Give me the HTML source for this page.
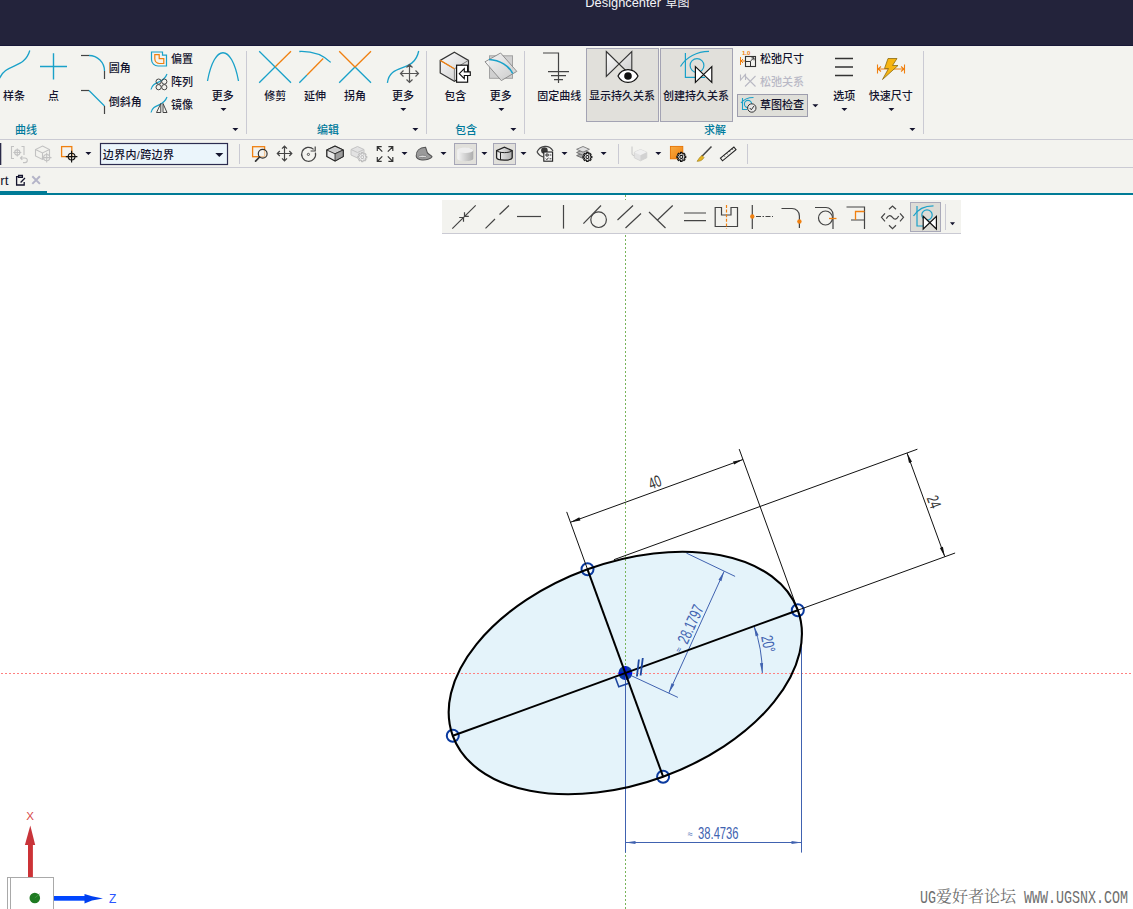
<!DOCTYPE html>
<html lang="zh-CN">
<head>
<meta charset="utf-8">
<title>Designcenter 草图</title>
<style>
html,body{margin:0;padding:0;}
body{width:1133px;height:909px;overflow:hidden;position:relative;background:#fff;
 font-family:"Liberation Sans","Noto Sans CJK SC",sans-serif;font-size:12px;color:#1a1a2e;}
.abs{position:absolute;}
#title{left:0;top:0;width:1133px;height:45px;background:#23233b;border-bottom:1px solid #171737;}
#title .t{position:absolute;left:585px;top:-6px;color:#f0f0f4;font-size:13px;white-space:nowrap;}
#ribbon{left:0;top:46px;width:1133px;height:93px;background:#f3f3ef;border-bottom:1px solid #cacad3;}
#tbar{left:0;top:140px;width:1133px;height:27px;background:#f3f3ef;border-bottom:1px solid #cacad3;}
#tabs{left:0;top:168px;width:1133px;height:25px;background:#f3f3ef;border-bottom:2px solid #007b96;}
#tabact{left:0;top:191px;width:47px;height:4px;background:#007b96;}
.lbl{position:absolute;white-space:nowrap;font-size:12px;line-height:14px;color:#1a1a2e;}
.c{transform:translateX(-50%);}
.grp{color:#1b89a8;}
.sep{position:absolute;width:1px;background:#cacad3;}
.arr{position:absolute;width:0;height:0;border-left:3px solid transparent;border-right:3px solid transparent;border-top:3px solid #1a1a2e;}
svg{position:absolute;overflow:visible;}
.rl text{font-family:"Liberation Sans","Noto Sans CJK SC",sans-serif;font-size:11px;fill:#14142e;font-weight:500;}
.rl1{font-family:"Liberation Sans","Noto Sans CJK SC",sans-serif;font-size:11px;fill:#14142e;font-weight:500;letter-spacing:.35px;}
.rg text{font-family:"Liberation Sans","Noto Sans CJK SC",sans-serif;font-size:11px;fill:#007a9c;font-weight:500;}
#cv .k{stroke:#111;stroke-width:1;fill:none;}
#cv .ka{fill:#111;stroke:none;}
#cv .b{stroke:#4062b0;stroke-width:1;fill:none;}
#cv .ba{fill:#4062b0;stroke:none;}
#cv text{font-family:"Liberation Sans",sans-serif;}
#cv .tk{fill:#333;}
#cv .tb{fill:#4062b0;}
</style>
</head>
<body>
<div id="title" class="abs"><svg width="200" height="20" viewBox="580 0 200 20" style="left:580px;top:0"><text x="585.3" y="7.2" font-size="12.85" fill="#f4f4f8" style="font-family:'Liberation Sans','Noto Sans CJK SC',sans-serif">Designcenter <tspan font-size="12" dx="1">草图</tspan></text></svg></div>
<div id="ribbon" class="abs"></div>
<div id="tbar" class="abs"></div>
<div id="tabs" class="abs"></div>
<div id="tabact" class="abs"></div>
<svg id="rb" width="1133" height="94" viewBox="0 46 1133 94" style="left:0;top:46px">
<g fill="none" stroke-linecap="butt">
<!-- 曲线 group icons -->
<path d="M-1 79.5C6 62 24 70 29.8 50.5" stroke="#19a1c9" stroke-width="1.3"/>
<path d="M40 66.5H67M53.5 53.2V79.6" stroke="#19a1c9" stroke-width="1.4"/>
<path d="M81 55.5H89" stroke="#444" stroke-width="1.2"/>
<path d="M89 55.5A15.5 15.5 0 0 1 104.5 71" stroke="#19a1c9" stroke-width="1.3"/>
<path d="M104.5 71V79" stroke="#444" stroke-width="1.2"/>
<path d="M81 90.5H89" stroke="#444" stroke-width="1.2"/>
<path d="M89 90.5L104.5 106" stroke="#19a1c9" stroke-width="1.3"/>
<path d="M104.5 106V114" stroke="#444" stroke-width="1.2"/>
<!-- offset -->
<path d="M151.5 52H162.5V55.2H166.5V66H158A6.5 6.5 0 0 1 151.5 59.5Z" stroke="#19a1c9" stroke-width="1.2"/>
<path d="M154.8 54.6H159.2V58.6H163.8V63.5H159.5A4.7 4.7 0 0 1 154.8 58.8Z" stroke="#f08010" stroke-width="1.2"/>
<!-- pattern -->
<path d="M151 89.5C153 80 163 85 167 74" stroke="#19a1c9" stroke-width="1.2"/>
<circle cx="158.6" cy="81.6" r="2.6" stroke="#444" stroke-width="1"/><circle cx="164.3" cy="81.6" r="2.6" stroke="#444" stroke-width="1"/>
<circle cx="158.6" cy="87.2" r="2.6" stroke="#444" stroke-width="1"/><circle cx="164.3" cy="87.2" r="2.6" stroke="#444" stroke-width="1"/>
<!-- mirror -->
<path d="M151 112.5C153 103 163 108 167 97" stroke="#19a1c9" stroke-width="1.2"/>
<path d="M156.5 112.5H160.8V103.5ZM163 103.5V112.5H167Z" stroke="#444" stroke-width="1"/>
<!-- more parabola -->
<path d="M207.5 81C214.5 43.3 231.5 43.3 238.5 81" stroke="#19a1c9" stroke-width="1.3"/>
<!-- 编辑 group icons -->
<path d="M259.2 51.2L291 82.8M259.2 82.8L275 67" stroke="#19a1c9" stroke-width="1.3"/>
<path d="M275 67L291 51.2" stroke="#f08010" stroke-width="1.3"/>
<path d="M299.3 51.5C312 51 323 55 330.7 62.4M299.3 82.8L307 75" stroke="#19a1c9" stroke-width="1.3"/>
<path d="M307 75L323.2 58.5" stroke="#f08010" stroke-width="1.3"/>
<path d="M339.2 82.8L355 67L371 82.8" stroke="#19a1c9" stroke-width="1.3"/>
<path d="M339.2 51.2L355 67L371 51.2" stroke="#f08010" stroke-width="1.3"/>
<path d="M387.4 82.8C390 62 414 74 418.7 51" stroke="#19a1c9" stroke-width="1.3"/>
<path d="M400.5 73.5H418.5M409.5 64.5V82.5M403.5 70.5L400.5 73.5L403.5 76.5M415.5 70.5L418.5 73.5L415.5 76.5M406.5 67.5L409.5 64.5L412.5 67.5M406.5 79.5L409.5 82.5L412.5 79.5" stroke="#555" stroke-width="1.2"/>
</g>
<!-- include cube -->
<defs>
<linearGradient id="gc" x1="0" y1="0" x2="1" y2="1"><stop offset="0" stop-color="#fdfdfd"/><stop offset="1" stop-color="#c9c9c9"/></linearGradient>
<linearGradient id="go" x1="0" y1="0" x2="1" y2="1"><stop offset="0" stop-color="#f9a63a"/><stop offset="1" stop-color="#ee7d0c"/></linearGradient>
</defs>
<path d="M454.4 52.2L468.5 60.4V73L454.4 81.2L440.2 73V60.4Z" fill="url(#gc)" stroke="#333" stroke-width="1.2"/>
<path d="M440.2 60.4L454.4 68.8L468.5 60.4M454.4 68.8V81" fill="none" stroke="#666" stroke-width="0.8"/>
<path d="M440.2 60.4L454.4 68.8" stroke="#f08010" stroke-width="1.3"/>
<rect x="456.6" y="65.2" width="11" height="17" fill="#fff" stroke="#111" stroke-width="1.2"/>
<path d="M459.3 73.7L464.3 68.7V71.9H470.3V75.5H464.3V78.7Z" fill="#fff" stroke="#111" stroke-width="1.1"/>
<!-- include more -->
<rect x="489.5" y="55.8" width="23" height="22.5" fill="#d0d0d0" stroke="#a2a2a2" stroke-width="1"/>
<path d="M485 61.8L500.6 53L516.8 71.4L501.3 80.6Z" fill="url(#gc)" fill-opacity=".85" stroke="#8f8f8f" stroke-width="1"/>
<path d="M489 59.5C500 60 509 66 512.7 73.5" fill="none" stroke="#19a1c9" stroke-width="1.6"/>
<!-- fix curve -->
<path d="M543 53H558.5V83M548 71.7H569M551 75.7H566M554 79.7H563" fill="none" stroke="#444" stroke-width="1.2"/>
<!-- buttons -->
<rect x="586.5" y="48.5" width="72" height="73" fill="#e1e0db" stroke="#a3a3b3"/>
<rect x="660.5" y="48.5" width="72" height="73" fill="#e1e0db" stroke="#a3a3b3"/>
<path d="M606.3 51.5L631.8 76.5V51.5L606.3 76.5Z" fill="url(#gc)" stroke="#333" stroke-width="1.1"/>
<path d="M618 76C622 67.5 634 67.5 638 76C634 84.5 622 84.5 618 76Z" fill="#fff" stroke="#111" stroke-width="1.2"/>
<circle cx="628" cy="76" r="3.8" fill="#111"/>
<g fill="none" stroke="#19a1c9" stroke-width="1.2">
<path d="M685.4 53V77.4H705"/><path d="M680.5 66.5C686 57 697 51.5 709 51.3"/><circle cx="697" cy="65.5" r="6.9"/>
</g>
<path d="M695.4 66.6L711.8 82.4V66.6L695.4 82.4Z" fill="#fff" stroke="#111" stroke-width="1.2"/>
<!-- relax dim icon -->
<g fill="none">
<path d="M740.5 57V65M741 61H746M743 59L741 61L743 63" stroke="#f08010" stroke-width="1"/>
<rect x="745.5" y="56.5" width="10" height="10" stroke="#333" stroke-width="1.1"/>
<path d="M745.5 61.5H750.5V66.5M750.5 61L754 57.8M751.5 57.8H754V60.3" stroke="#333" stroke-width="1"/>
<path d="M740.5 74.5V80L745.5 74.5V80M744 75L755.5 86.5M755.5 76L745 86.5" stroke="#b9b9c3" stroke-width="1.1"/>
</g>
<text x="742" y="55" font-size="6" font-weight="bold" fill="#f08010" font-family="Liberation Sans,sans-serif">1.0</text>
<rect x="737.5" y="94.5" width="70" height="22" fill="#dfdfd9" stroke="#9d9dad"/>
<g fill="none" stroke="#19a1c9" stroke-width="1.1"><path d="M742.5 98V109.5H747"/><path d="M741 103C744 99 748 97.5 753.5 97.5"/><circle cx="748" cy="104" r="3.6"/></g>
<circle cx="751.8" cy="108" r="4.2" fill="#e8e8e8" stroke="#333" stroke-width="1"/>
<path d="M749.8 108L751.3 109.8L754 106" fill="none" stroke="#333" stroke-width="1"/>
<!-- options -->
<path d="M835 58.5H853M835 67H853M835 75.4H853" stroke="#333" stroke-width="1.5" fill="none"/>
<!-- quick dim -->
<path d="M877.5 64.5V73.5M904.5 64.5V73.5M878 69H904M881 66.5L878 69L881 71.5M901 66.5L904 69L901 71.5" stroke="#f08010" stroke-width="1.1" fill="none"/>
<path d="M888 58.5H897L892.5 65.5H898L882.5 79.5L888.5 68.5H884.5Z" fill="#f7b512" stroke="#8a6a10" stroke-width=".8"/>
<!-- separators -->
<path d="M246.5 51V134M426.5 51V134M524.5 51V134M923.5 51V134" stroke="#cacad3" stroke-width="1" fill="none"/>
<!-- arrows -->
<g fill="#14142e">
<path d="M220.5 108H226.5L223.5 111Z"/><path d="M400.3 108H406.3L403.3 111Z"/><path d="M498.4 108H504.4L501.4 111Z"/>
<path d="M841.4 108H847.4L844.4 111Z"/><path d="M888.4 108H894.4L891.4 111Z"/><path d="M812.4 104.2H818.4L815.4 107.2Z"/>
<path d="M232.4 128H238.4L235.4 131Z"/><path d="M412.4 128H418.4L415.4 131Z"/><path d="M510.4 128H516.4L513.4 131Z"/><path d="M909.4 128H915.4L912.4 131Z"/>
</g>
<!-- labels -->
<g class="rl" text-anchor="middle">
<text x="14.1" y="99.5">样条</text><text x="53.5" y="99.5">点</text><text x="222.7" y="99.5">更多</text>
<text x="275.2" y="99.5">修剪</text><text x="315.1" y="99.5">延伸</text><text x="355" y="99.5">拐角</text><text x="403" y="99.5">更多</text>
<text x="455.2" y="99.5">包含</text><text x="500.8" y="99.5">更多</text><text x="559.3" y="99.5">固定曲线</text>
<text x="622" y="99.5">显示持久关系</text><text x="696" y="99.5">创建持久关系</text>
<text x="844.3" y="99.5">选项</text><text x="890.7" y="99.5">快速尺寸</text>
</g>
<g class="rl">
<text x="108.8" y="71.8">圆角</text><text x="108.8" y="105.5">倒斜角</text>
<text x="171" y="62.5">偏置</text><text x="171" y="85.7">阵列</text><text x="171" y="108.7">镜像</text>
<text x="760" y="62.8">松弛尺寸</text><text x="760" y="85.8" style="fill:#b9b9c6">松弛关系</text><text x="760" y="108.8">草图检查</text>
</g>
<g class="rg">
<text x="15" y="133.7" fill="#1b88a8">曲线</text><text x="317" y="133.7" fill="#1b88a8">编辑</text><text x="455" y="133.7" fill="#1b88a8">包含</text><text x="704" y="133.7" fill="#1b88a8">求解</text>
</g>
</svg>

<svg id="tb" width="1133" height="28" viewBox="0 140 1133 28" style="left:0;top:140px">
<rect x="0" y="143" width="1.3" height="22" fill="#2a2a48"/>
<g fill="none" stroke="#c2c2c2" stroke-width="1.1">
<path d="M14 146.5H11.5V158.5H14M21.5 146.5H24V155"/><circle cx="17.3" cy="152.5" r="2.6"/><path d="M17.3 148.5V156.5M13.3 152.5H21.3"/>
<path d="M20.5 158H25A2.3 2.3 0 0 1 25 162.6H23M22.3 156.2L20.5 158L22.3 159.8"/>
<path d="M42.5 146L49.5 149.5V156L42.5 159.5L35.5 156V149.5ZM35.5 149.5L42.5 153L49.5 149.5M42.5 153V159.5"/>
</g>
<circle cx="46.7" cy="157.6" r="3.1" fill="#f3f3ef" stroke="#c2c2c2" stroke-width="1.1"/><path d="M46.7 152.8V162.4M41.9 157.6H51.5" stroke="#c2c2c2" stroke-width="1.1"/>
<rect x="61.6" y="146.6" width="10.2" height="10" fill="none" stroke="#f08010" stroke-width="1.3"/>
<circle cx="71.6" cy="156.6" r="3.4" fill="none" stroke="#111" stroke-width="1.15"/><path d="M71.6 150.8V162.4M65.8 156.6H77.4" stroke="#111" stroke-width="1.15"/>
<!-- combobox -->
<rect x="100.5" y="143.5" width="127" height="21" fill="#ebf5fb" stroke="#2c2c50" stroke-width="1.2"/>
<text class="rl1" x="102.8" y="158.6">边界内/跨边界</text>
<path d="M215.3 153H223.3L219.3 157Z" fill="#14142e"/>
<!-- separators -->
<path d="M239.5 144V164M618.5 144V164M747.5 144V164" stroke="#cacad3" stroke-width="1" fill="none"/>
<!-- zoom -->
<rect x="252.6" y="146.7" width="12" height="10" fill="none" stroke="#f08010" stroke-width="1.3"/>
<circle cx="262.7" cy="153.8" r="4.4" fill="#f3f3ef" fill-opacity=".6" stroke="#333" stroke-width="1.2"/><path d="M259.6 157L255.6 161.2" stroke="#333" stroke-width="1.7" stroke-linecap="round"/>
<!-- pan -->
<path d="M277.3 153.5H291.8M284.5 146.2V160.8M279.8 151L277.3 153.5L279.8 156M289.3 151L291.8 153.5L289.3 156M282 148.7L284.5 146.2L287 148.7M282 158.3L284.5 160.8L287 158.3" fill="none" stroke="#444" stroke-width="1.2"/>
<!-- rotate -->
<path d="M313.6 149.4A7 7 0 1 0 315.4 152.6" fill="none" stroke="#444" stroke-width="1.2"/><path d="M310.6 151H315.2V146.4" fill="none" stroke="#444" stroke-width="1.2"/><circle cx="308.4" cy="154.4" r="1.1" fill="none" stroke="#444" stroke-width=".9"/>
<!-- shaded cube -->
<path d="M335 146.2L343.2 150V156.5L335 161L326.8 156.5V150Z" fill="#e9e9e9" stroke="#222" stroke-width="1.3" stroke-linejoin="round"/>
<path d="M326.8 150L335 153.8L343.2 150L335 146.2Z" fill="#cdcdcd" stroke="#222" stroke-width=".9"/><path d="M335 153.8V161L343.2 156.5V150Z" fill="#9d9d9d" stroke="#222" stroke-width=".8"/>
<!-- grey cube gear -->
<path d="M357.5 146.5L364 149.5V155L357.5 158L351 155V149.5Z" fill="#e2e2e2" stroke="#c4c4c4" stroke-width="1"/><path d="M351 149.5L357.5 152.5L364 149.5" fill="none" stroke="#c4c4c4" stroke-width="1"/>
<path d="M366.78 156.32L366.78 157.88L365.51 157.87L365.11 158.82L366.02 159.72L364.92 160.82L364.02 159.91L363.07 160.31L363.08 161.58L361.52 161.58L361.53 160.31L360.58 159.91L359.68 160.82L358.58 159.72L359.49 158.82L359.09 157.87L357.82 157.88L357.82 156.32L359.09 156.33L359.49 155.38L358.58 154.48L359.68 153.38L360.58 154.29L361.53 153.89L361.52 152.62L363.08 152.62L363.07 153.89L364.02 154.29L364.92 153.38L366.02 154.48L365.11 155.38L365.51 156.33Z" fill="#fafafa" stroke="#bdbdbd" stroke-width="1.1" stroke-linejoin="round"/><circle cx="362.3" cy="157.1" r="1.5" fill="#fafafa" stroke="#bdbdbd" stroke-width="1.1"/>
<!-- fit -->
<path d="M377.3 146.6L382.3 151.6M377.3 151V146.6H381.7M392.8 146.6L387.8 151.6M388.4 146.6H392.8V151M377.3 161.4L382.3 156.4M377.3 157V161.4H381.7M392.8 161.4L387.8 156.4M388.4 161.4H392.8V157" fill="none" stroke="#333" stroke-width="1.2"/>
<!-- hat -->
<path d="M416.2 156C416 151 419.5 147.5 425.5 147.2C426.5 149.5 426.8 151.5 427.5 153C429 154.5 431.5 155.5 432 156.8C431 159 426 160.3 422 160C418.5 159.6 416.4 158.5 416.2 156Z" fill="#9a9a9a" stroke="#555" stroke-width="1.1"/>
<ellipse cx="422.6" cy="156.4" rx="4" ry="1.2" fill="#dcdcdc" stroke="#666" stroke-width=".6"/>
<!-- selected boxes -->
<rect x="454.5" y="143.5" width="22" height="21" fill="#e1e0db" stroke="#a6a6b6"/>
<rect x="493.5" y="143.5" width="22" height="21" fill="#e1e0db" stroke="#a6a6b6"/>
<defs><linearGradient id="gy" x1="0" y1="0" x2="1" y2="0"><stop offset="0" stop-color="#f6f6f6"/><stop offset="1" stop-color="#adadad"/></linearGradient></defs>
<path d="M457.3 150.5C457.3 146.8 473.3 146.8 473.3 150.5V158.5C473.3 162 457.3 162 457.3 158.5Z" fill="url(#gy)"/><ellipse cx="465.3" cy="150.3" rx="8" ry="2.7" fill="#eeeeee"/>
<path d="M496.6 150.6L504.4 147.2L512.2 150.6V157.6C512.2 161 496.6 161 496.6 157.6Z" fill="url(#gy)" stroke="#222" stroke-width="1.3"/><path d="M496.6 150.6C499 153.3 509.8 153.3 512.2 150.6M500.5 152.4V159.6" fill="none" stroke="#222" stroke-width="1"/>
<!-- eye checklist -->
<path d="M537 152C540.5 144.6 549.5 144.6 553 151" fill="none" stroke="#444" stroke-width="1.2"/><path d="M537 152C538.6 154.6 540.6 156.3 543.3 157" fill="none" stroke="#444" stroke-width="1.2"/><circle cx="544.4" cy="150.6" r="3.3" fill="#3a3a3a"/>
<rect x="543.8" y="152" width="8.8" height="9.2" fill="#f4f4f4" stroke="#222" stroke-width="1.1"/><path d="M546 154H548.2V156H546ZM549.6 155H551.4M545.8 158.6L546.9 159.7L548.5 157.7M549.6 158.8H551.4" fill="none" stroke="#222" stroke-width=".9"/>
<!-- layers gear -->
<path d="M576.6 155.6L583 152.9L589.4 155.6L583 158.4Z" fill="#a8a8a8" stroke="#666" stroke-width=".9"/>
<path d="M576.6 152.5L583 149.8L589.4 152.5L583 155.3Z" fill="#bcbcbc" stroke="#666" stroke-width=".9"/>
<path d="M576.6 149.3L583 146.5L589.4 149.3L583 152.1Z" fill="#e0e0e0" stroke="#777" stroke-width=".9"/>
<path d="M591.88 156.22L591.88 157.78L590.61 157.77L590.21 158.72L591.12 159.62L590.02 160.72L589.12 159.81L588.17 160.21L588.18 161.48L586.62 161.48L586.63 160.21L585.68 159.81L584.78 160.72L583.68 159.62L584.59 158.72L584.19 157.77L582.92 157.78L582.92 156.22L584.19 156.23L584.59 155.28L583.68 154.38L584.78 153.28L585.68 154.19L586.63 153.79L586.62 152.52L588.18 152.52L588.17 153.79L589.12 154.19L590.02 153.28L591.12 154.38L590.21 155.28L590.61 156.23Z" fill="#fff" stroke="#111" stroke-width="1.1" stroke-linejoin="round"/><circle cx="587.4" cy="157.0" r="1.5" fill="#fff" stroke="#111" stroke-width="1.1"/>
<!-- grey cube axes -->
<path d="M632 146.5V154.5L638 158" fill="none" stroke="#c6c6c6" stroke-width="1"/><path d="M640.5 149.5L646.8 152.3V157.8L640.5 160.8L634.3 157.8V152.3Z" fill="#e3e3e3" stroke="#cfcfcf" stroke-width=".8"/><path d="M634.3 152.3L640.5 155.2L646.8 152.3L640.5 149.5Z" fill="#f0f0f0"/><path d="M640.5 155.2V160.8L646.8 157.8V152.3Z" fill="#d2d2d2"/>
<!-- orange square gear -->
<rect x="670.4" y="146.4" width="12.4" height="12.4" fill="url(#go2)" stroke="#e67300" stroke-width=".9"/>
<defs><linearGradient id="go2" x1="0" y1="0" x2="1" y2="1"><stop offset="0" stop-color="#f9ab40"/><stop offset="1" stop-color="#ef7f10"/></linearGradient></defs>
<path d="M685.78 156.12L685.78 157.68L684.51 157.67L684.11 158.62L685.02 159.52L683.92 160.62L683.02 159.71L682.07 160.11L682.08 161.38L680.52 161.38L680.53 160.11L679.58 159.71L678.68 160.62L677.58 159.52L678.49 158.62L678.09 157.67L676.82 157.68L676.82 156.12L678.09 156.13L678.49 155.18L677.58 154.28L678.68 153.18L679.58 154.09L680.53 153.69L680.52 152.42L682.08 152.42L682.07 153.69L683.02 154.09L683.92 153.18L685.02 154.28L684.11 155.18L684.51 156.13Z" fill="#fff" stroke="#111" stroke-width="1.1" stroke-linejoin="round"/><circle cx="681.3" cy="156.9" r="1.5" fill="#fff" stroke="#111" stroke-width="1.1"/>
<!-- brush -->
<path d="M711.5 146.5L701.5 156.8" stroke="#444" stroke-width="1.5" fill="none"/><path d="M702 155.5L704 157.5C702.5 160.5 699.5 161.5 697 161.3C698.5 159.5 699.5 157 702 155.5Z" fill="#e6b422" stroke="#9a7a18" stroke-width=".6"/>
<!-- ruler -->
<path d="M720.4 158.2L733.9 147L736 149.6L722.5 160.8Z" fill="#f3f3ef" stroke="#222" stroke-width="1.1"/><path d="M723.8 155.4L724.9 156.7M726.5 153.1L727.6 154.4M729.2 150.8L730.3 152.1M731.9 148.6L733 149.9" stroke="#222" stroke-width=".7"/>
<!-- arrows -->
<g fill="#14142e">
<path d="M85.4 152H91.4L88.4 155Z"/><path d="M401.5 152H407.5L404.5 155Z"/><path d="M440.5 152H446.5L443.5 155Z"/><path d="M481.4 152H487.4L484.4 155Z"/>
<path d="M520.5 152H526.5L523.5 155Z"/><path d="M561.5 152H567.5L564.5 155Z"/><path d="M600.6 152H606.6L603.6 155Z"/><path d="M655.3 152H661.3L658.3 155Z"/>
</g>
</svg>

<svg id="tabsv" width="200" height="26" viewBox="0 168 200 26" style="left:0;top:168px">
<text x="0.2" y="185" font-size="13.5" fill="#14142e" font-family="Liberation Sans,sans-serif">rt</text>
<path d="M18.5 176.6H16.6V185H24.2V182M18.6 175.5H22.4V177.3H18.6ZM20.6 182.5L25 178" fill="none" stroke="#14142e" stroke-width="1.3"/>
<path d="M32.3 176.3L39.9 183.9M39.9 176.3L32.3 183.9" stroke="#b4b4c8" stroke-width="2" fill="none"/>
</svg>

<svg id="cv" width="1133" height="909" viewBox="0 0 1133 909" style="left:0;top:0">
<ellipse cx="625.3" cy="673.0" rx="183.6" ry="110.4" transform="rotate(-20 625.3 673.0)" fill="#e4f3fa" stroke="none"/>
<line x1="625.5" y1="195" x2="625.5" y2="909" stroke="#78b45a" stroke-width="1" stroke-dasharray="2 2"/>
<line x1="1" y1="673.5" x2="1133" y2="673.5" stroke="#ff8080" stroke-width="1" stroke-dasharray="2 2"/>
<circle cx="797.8" cy="610.2" r="6" fill="#fff" fill-opacity=".6" stroke="#0a3a9f" stroke-width="2"/>
<circle cx="587.5" cy="569.3" r="6" fill="#fff" fill-opacity=".6" stroke="#0a3a9f" stroke-width="2"/>
<circle cx="452.8" cy="735.8" r="6" fill="#fff" fill-opacity=".6" stroke="#0a3a9f" stroke-width="2"/>
<circle cx="663.1" cy="776.7" r="6" fill="#fff" fill-opacity=".6" stroke="#0a3a9f" stroke-width="2"/>
<circle cx="625.4" cy="673" r="7" fill="#0b3aa2"/>
<path d="M618.6 673.3H632M625.5 666.5V680" stroke="#0000ff" stroke-width="1.8" fill="none"/>
<line class="k" x1="587.5" y1="569.3" x2="566.7" y2="511.9"/>
<line class="k" x1="797.8" y1="610.2" x2="739.2" y2="449.1"/>
<line class="k" x1="570.4" y1="522.3" x2="743.0" y2="459.5"/>
<polygon class="ka" points="570.4,522.3 580.4,520.4 579.3,517.3"/>
<polygon class="ka" points="743.0,459.5 733.0,461.4 734.1,464.4"/>
<line class="k" x1="613.9" y1="559.7" x2="917.4" y2="449.2"/>
<line class="k" x1="797.8" y1="610.2" x2="955.1" y2="553.0"/>
<line class="k" x1="907.0" y1="453.0" x2="944.8" y2="556.7"/>
<polygon class="ka" points="907.0,453.0 909.0,462.9 912.0,461.8"/>
<polygon class="ka" points="944.8,556.7 942.9,546.8 939.9,547.9"/>
<line class="b" x1="686.4" y1="553.1" x2="735.1" y2="576.4"/>
<line class="b" x1="632.0" y1="676.0" x2="677.9" y2="697.4"/>
<line class="b" x1="724.1" y1="571.4" x2="668.8" y2="693.0"/>
<polygon class="ba" points="724.1,571.4 718.5,579.8 721.4,581.2"/>
<polygon class="ba" points="668.8,693.0 674.4,684.6 671.5,683.2"/>
<path class="b" fill="none" d="M762.3,673.0 A137 137 0 0 0 754.0,626.1"/>
<polygon class="ba" points="762.3,673.0 763.1,662.9 759.9,663.2"/>
<polygon class="ba" points="754.0,626.1 755.6,636.2 758.6,635.2"/>
<line class="b" x1="625.5" y1="673.0" x2="625.5" y2="852.6"/>
<line class="b" x1="801.5" y1="646.0" x2="801.5" y2="852.6"/>
<line class="b" x1="625.5" y1="842.5" x2="801.5" y2="842.5"/>
<polygon class="ba" points="625.5,842.5 635.5,844.1 635.5,840.9"/>
<polygon class="ba" points="801.5,842.5 791.5,840.9 791.5,844.1"/>
<ellipse cx="625.3" cy="673.0" rx="183.6" ry="110.4" transform="rotate(-20 625.3 673.0)" fill="none" stroke="#000" stroke-width="2.1"/>
<line x1="452.8" y1="735.8" x2="797.8" y2="610.2" stroke="#000" stroke-width="2"/>
<line x1="587.5" y1="569.3" x2="663.1" y2="776.7" stroke="#000" stroke-width="2"/>
<polyline points="615.4,677.7 618.8,686.7 628.1,683.4" fill="none" stroke="#1e47a0" stroke-width="1.6"/>
<line x1="636.9" y1="676.5" x2="638.9" y2="659.5" stroke="#1e47a0" stroke-width="1.8"/>
<line x1="640.6" y1="675.5" x2="642.8" y2="658" stroke="#1e47a0" stroke-width="1.8"/>
<text class="tk" font-size="16.5" text-anchor="middle" transform="translate(656.8 487.6) rotate(-20.0) scale(0.68 1)">40</text>
<text class="tk" font-size="16.5" text-anchor="middle" transform="translate(928.7 503.8) rotate(70.0) scale(0.68 1)">24</text>
<text class="tb" font-size="16.5" text-anchor="middle" transform="translate(695.7 626.6) rotate(-65.5) scale(0.68 1)">28.1797</text>
<text class="tb" font-size="9" text-anchor="middle" transform="translate(681.6 650.9) rotate(-65.5)">≈</text>
<text class="tb" font-size="16.5" text-anchor="middle" transform="translate(762.7 645.0) rotate(78.5) scale(0.68 1)">20°</text>
<text class="tb" font-size="16.5" text-anchor="middle" transform="translate(718.3 839.2) rotate(0.0) scale(0.68 1)">38.4736</text>
<text class="tb" font-size="9" text-anchor="middle" transform="translate(690.3 836.5) rotate(0.0)">≈</text>
</svg>
<div class="abs" style="left:442px;top:200px;width:519px;height:33px;background:#f3f3ef;border-bottom:1px solid #cacad3;"></div>
<svg id="sk" width="519" height="34" viewBox="442 200 519 34" style="left:442px;top:200px">
<g fill="none" stroke="#444" stroke-width="1.2">
<path d="M452.3 228.6L475.7 205.4M459.2 217.5H463.5V221.7M464.5 212.2V216.3H468.8"/>
<path d="M485.5 228.4L495 219M499.5 214.5L509 205.5"/>
<path d="M517 216.5H541"/>
<path d="M563.5 205V228.6"/>
<circle cx="598.6" cy="219.7" r="7.8"/><path d="M583.4 223.6L601 205.5"/>
<path d="M617.5 220L633 205.5M625.5 228L641 213.5"/>
<path d="M649 212L665.5 228M657.5 220L672.7 205.5"/>
<path d="M684 213H706M684 220.6H706"/>
<path d="M715.2 207.5V226.5H737.5V207.5H731V215H721.5V207.5Z"/>
<path d="M752.3 205V229"/><path d="M756 216.5H773" stroke-dasharray="5 1.5 1.5 1.5"/>
<path d="M781.5 208.5H792A7.4 7.4 0 0 1 799.4 216V228"/>
<path d="M815 207.5H826A7 7 0 0 1 833 214.5V229"/><circle cx="825.5" cy="218" r="7"/>
<path d="M846.5 207H864.5V229M851 220H864.5"/>
<path d="M889 209.3L892.5 206L896 209.3M889 225.3L892.5 228.6L896 225.3M885 213.3L881.5 217.3L885 221.3M900 213.3L903.5 217.3L900 221.3M886.3 218.6C888.5 214.5 890.8 215 892.5 217.3C894.3 219.8 896.5 220 898.7 216"/>
</g>
<path d="M726.5 205V228.5" stroke="#f08010" stroke-width="1.2" stroke-dasharray="3 1.6" fill="none"/>
<circle cx="752.3" cy="216.5" r="2.2" fill="#f08010"/>
<circle cx="799.4" cy="221.5" r="2.2" fill="#f08010"/>
<path d="M829 218.5H836.5" stroke="#f08010" stroke-width="1.3" fill="none"/>
<path d="M855.5 220V211.5H864.5" stroke="#f08010" stroke-width="1.3" fill="none"/>
<rect x="910.5" y="202.5" width="30" height="29" fill="#dddcd6" stroke="#a9a9b9"/>
<g fill="none" stroke="#19a1c9" stroke-width="1.2"><path d="M917 206V226H926"/><path d="M913.5 216C917.5 209.5 925 205.8 933.5 205.8"/><circle cx="927" cy="215" r="5.2"/></g>
<path d="M923.2 216.3L936.4 229V216.3L923.2 229Z" fill="#fff" stroke="#111" stroke-width="1.2"/>
<path d="M945.5 204V230" stroke="#cacad3" fill="none"/>
<path d="M950 222.3H955L952.5 225.3Z" fill="#14142e"/>
</svg>

<svg id="tri" width="140" height="110" viewBox="0 800 140 110" style="left:0;top:800px">
<rect x="7.5" y="877.5" width="46" height="40" fill="#fff" stroke="#a9a9a9"/>
<path d="M10.5 878V910" stroke="#a9a9a9" fill="none"/>
<rect x="28" y="844" width="4.9" height="33" fill="#cc3236"/>
<path d="M30.3 825.6L35.2 845H24.9Z" fill="#c8343a"/>
<rect x="54" y="896" width="31" height="4.7" fill="#0046ff"/>
<path d="M84.5 894L92 896.3L103 898.4L92 900.6L84.5 903.5Z" fill="#0040f0"/>
<circle cx="34.8" cy="898" r="5.3" fill="#1f7a22"/>
<path d="M34.8 898L39.5 894" stroke="#3a9a3a" stroke-width="1" fill="none"/>
<text x="30.1" y="819.6" text-anchor="middle" font-size="11.5" fill="#d84848" font-family="Liberation Sans,sans-serif">X</text>
<text x="112.6" y="902.8" text-anchor="middle" font-size="12" fill="#2a55ff" font-family="Liberation Sans,sans-serif">Z</text>
</svg>
<svg id="wm" width="233" height="30" viewBox="900 880 233 30" style="left:900px;top:880px">
<g fill="#6e6e6e">
<text transform="translate(920 902.8) scale(.733 1)" font-size="18.2" style="font-family:'Liberation Mono',monospace">UG</text>
<text x="936" y="902.2" font-size="16" style="font-family:'Liberation Serif','Noto Serif CJK SC',serif">爱好者论坛</text>
<text transform="translate(1024 902.8) scale(.733 1)" font-size="18.2" style="font-family:'Liberation Mono',monospace">WWW.UGSNX.COM</text>
</g>
</svg>

</body>
</html>
